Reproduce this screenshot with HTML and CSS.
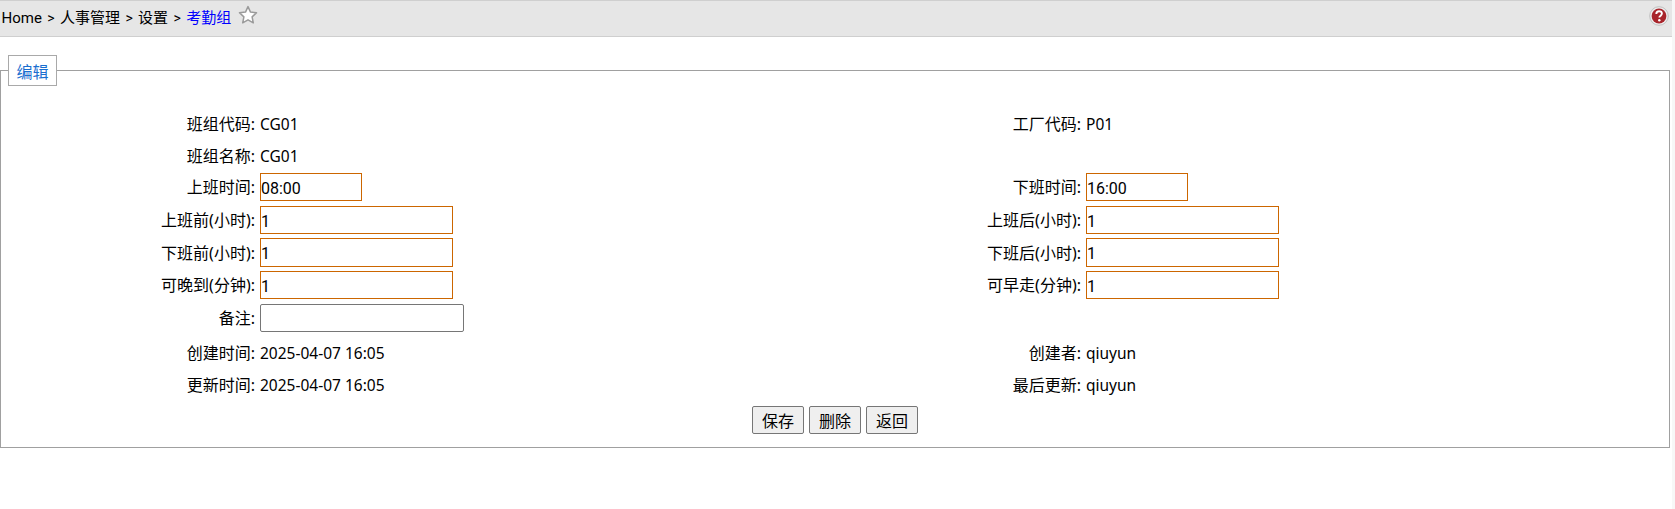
FILE: index.html
```html
<!DOCTYPE html>
<html lang="zh-CN">
<head>
<meta charset="utf-8">
<title>考勤组</title>
<link rel="stylesheet" href="styles.css">
</head>
<body>
<header class="crumbs">
  <nav class="trail">
    <span>Home</span><span class="sep">&gt;</span><span>人事管理</span><span class="sep">&gt;</span><span>设置</span><span class="sep">&gt;</span><span class="current">考勤组</span>
    <svg class="star" viewBox="0 0 20 20" width="20" height="20"><path d="M10 1.6l2.500 5.500 6 .7-4.400 4.100 1.200 5.900-5.300-3-5.300 3 1.200-5.900-4.400-4.100 6-.7z" fill="#fff" stroke="#9a9a9a" stroke-width="1.500" stroke-linejoin="round"/></svg>
  </nav>
  <svg class="help" viewBox="0 0 20 20" width="20" height="20"><circle cx="10" cy="10" r="9.300" fill="#ececec" stroke="#b5b5b5" stroke-width=".8"/><circle cx="10" cy="10" r="7.400" fill="#a8252b"/><path d="M7.300 7.900c0-1.700 1.200-2.700 2.800-2.700s2.800 1 2.800 2.400c0 1.300-.8 1.800-1.600 2.400-.6.400-.9.800-.9 1.500" fill="none" stroke="#fff" stroke-width="1.900"/><circle cx="10.300" cy="14.300" r="1.200" fill="#fff"/></svg>
</header>
<fieldset class="panel">
  <legend class="panel-title">编辑</legend>
  <form class="form">
    <div class="row r1"><label>班组代码:</label><span>CG01</span><label>工厂代码:</label><span>P01</span></div>
    <div class="row r2"><label>班组名称:</label><span>CG01</span></div>
    <div class="row r3"><label>上班时间:</label><span><input class="field short" value="08:00"></span><label>下班时间:</label><span><input class="field short" value="16:00"></span></div>
    <div class="row r4"><label>上班前(小时):</label><span><input class="field" value="1"></span><label>上班后(小时):</label><span><input class="field" value="1"></span></div>
    <div class="row r5"><label>下班前(小时):</label><span><input class="field" value="1"></span><label>下班后(小时):</label><span><input class="field" value="1"></span></div>
    <div class="row r6"><label>可晚到(分钟):</label><span><input class="field" value="1"></span><label>可早走(分钟):</label><span><input class="field" value="1"></span></div>
    <div class="row r7"><label>备注:</label><span><input class="memo"></span></div>
    <div class="row r8"><label>创建时间:</label><span>2025-04-07 16:05</span><label>创建者:</label><span>qiuyun</span></div>
    <div class="row r9"><label>更新时间:</label><span>2025-04-07 16:05</span><label>最后更新:</label><span>qiuyun</span></div>
    <div class="actions"><button type="button">保存</button><button type="button">删除</button><button type="button">返回</button></div>
  </form>
</fieldset>
</body>
</html>
```
FILE: styles.css
```css
* { box-sizing: border-box; }
html { margin: 0; padding: 0; background: #f7f7f7; }
body {
  margin: 0;
  padding: 0;
  width: 1672px;
  min-height: 100vh;
  background: #fff;
  font: 15px/20px Roboto, "Noto Sans CJK SC", sans-serif;
  color: #000;
}
.crumbs {
  height: 37px;
  background: #e6e6e6;
  border-top: 1px solid #cfcfcf;
  border-bottom: 1px solid #cfcfcf;
  display: flex;
  align-items: center;
  justify-content: space-between;
  padding: 0 3px 0 1.5px;
}
.trail { display: flex; align-items: center; height: 100%; padding-bottom: 2px; }
.sep { margin: 0 5.4px; font-size: 14px; }
.current { color: #0000ff; }
.star { margin-left: 7px; margin-top: -6px; }
.help { margin-top: -6px; }
.panel {
  margin: 18px 2px 0 0;
  padding: 0;
  height: 393px;
  border: 1px solid #a0a0a0;
  border-radius: 0;
  min-inline-size: 0;
}
.panel-title {
  margin-left: 7px;
  padding: 3px 7.5px 0;
  height: 31px;
  line-height: 28px;
  border: 1px solid #a9a9a9;
  background: #fff;
  color: #1a6fd0;
  font-size: 16px;
}
.form { padding-top: 22px; }
.row {
  display: grid;
  grid-template-columns: 259px 567px 259px 1fr;
  align-items: center;
  font-family: "Noto Sans", "Noto Sans CJK SC", sans-serif;
  font-size: 15.5px;
}
.row label { text-align: right; padding-right: 5px; font-size: 16px; }
.r1 { height: 32px; }
.r2 { height: 31px; }
.r3 { height: 32px; }
.r4 { height: 34px; }
.r5 { height: 31px; }
.r6 { height: 34px; }
.r7 { height: 32px; }
.r8 { height: 37px; }
.r9 { height: 27px; }
.field {
  display: block;
  width: 193px;
  height: 28px;
  padding: 2px 0 0;
  border: 1px solid #cc6600;
  border-radius: 0;
  outline: 0;
  background: #fff;
  font: 16px Roboto, sans-serif;
  color: #000;
}
.r5 .field { height: 29px; }
.field.short { width: 102px; }
.memo {
  display: block;
  width: 204px;
  height: 28px;
  border: 1px solid #767676;
  border-radius: 2px;
  background: #fff;
  padding: 0 2px;
  font: inherit;
}
.actions { display: flex; justify-content: center; gap: 5px; padding-top: 8px; }
.actions button {
  width: 52px;
  height: 28px;
  padding: 0;
  background: #efefef;
  border: 1px solid #767676;
  border-radius: 2px;
  font: 16px "Noto Sans CJK SC", sans-serif;
  color: #000;
}
```
